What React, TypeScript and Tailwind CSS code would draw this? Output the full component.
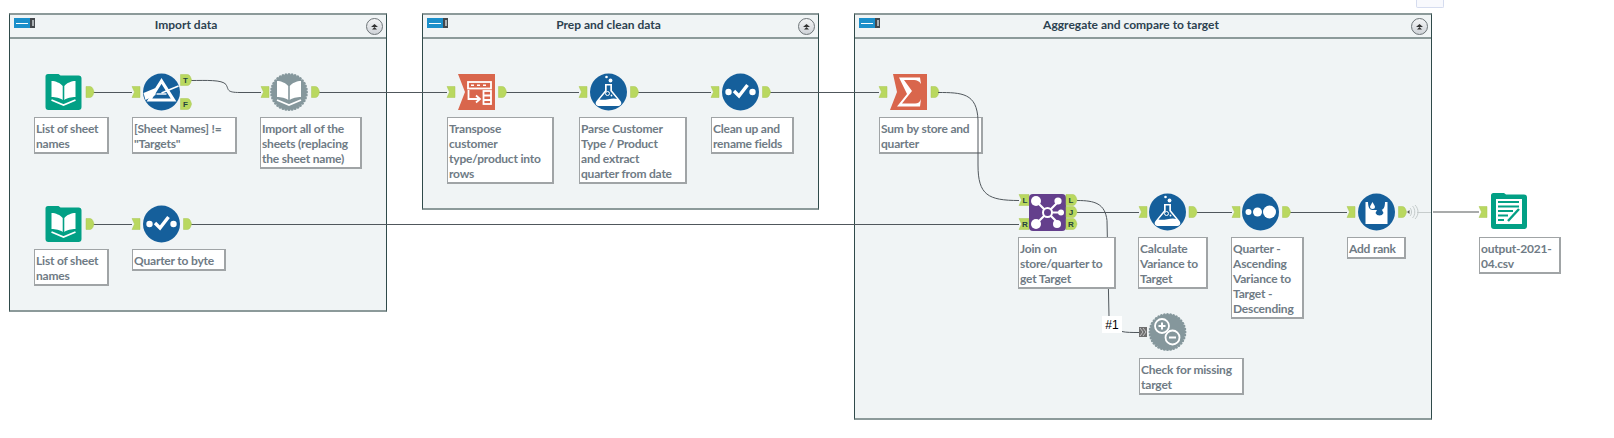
import type { ReactNode } from 'react'

const CONTAINERS = [
  { title: 'Import data', pos: 'left-[9px] top-[13px] w-[378px] h-[299px]' },
  { title: 'Prep and clean data', pos: 'left-[422px] top-[13px] w-[397px] h-[197px]' },
  { title: 'Aggregate and compare to target', pos: 'left-[854px] top-[13px] w-[578px] h-[407px]' },
]

const NOTES = [
  { text: 'List of sheet names', pos: 'left-[34px] top-[117px] w-[75px] h-[37px]' },
  { text: '[Sheet Names] != "Targets"', pos: 'left-[132px] top-[117px] w-[105px] h-[37px]' },
  { text: 'Import all of the sheets (replacing the sheet name)', pos: 'left-[260px] top-[117px] w-[102px] h-[52px]' },
  { text: 'List of sheet names', pos: 'left-[34px] top-[249px] w-[75px] h-[37px]' },
  { text: 'Quarter to byte', pos: 'left-[132px] top-[249px] w-[94px] h-[22px]' },
  { text: 'Transpose customer type/product into rows', pos: 'left-[447px] top-[117px] w-[107px] h-[67px]' },
  { text: 'Parse Customer Type / Product and extract quarter from date', pos: 'left-[579px] top-[117px] w-[108px] h-[67px] pr-[10px]' },
  { text: 'Clean up and rename fields', pos: 'left-[711px] top-[117px] w-[83px] h-[37px]' },
  { text: 'Sum by store and quarter', pos: 'left-[879px] top-[117px] w-[104px] h-[37px]' },
  { text: 'Join on store/quarter to get Target', pos: 'left-[1018px] top-[237px] w-[98px] h-[52px]' },
  { text: 'Calculate Variance to Target', pos: 'left-[1138px] top-[237px] w-[70px] h-[52px]' },
  { text: 'Quarter - Ascending Variance to Target - Descending', pos: 'left-[1231px] top-[237px] w-[73px] h-[82px]' },
  { text: 'Add rank', pos: 'left-[1347px] top-[237px] w-[59px] h-[22px]' },
  { text: 'output-2021-04.csv', pos: 'left-[1479px] top-[237px] w-[82px] h-[37px]' },
  { text: 'Check for missing target', pos: 'left-[1139px] top-[358px] w-[105px] h-[37px]' },
]

const GREEN = '#b9d85f'
const BLUE = '#155f9b'
const TEAL = '#02a085'
const ORANGE = '#d9664c'
const GREY = '#85979c'

function InAnchor({ x, y }: { x: number; y: number }) {
  return (
    <g transform={`translate(${x} ${y})`}>
      <path d="M0 -5.5H8V5.5H0L2.5 0Z" fill={GREEN} stroke="#a9c654" strokeWidth="0.5" />
    </g>
  )
}

function OutAnchor({ x, y }: { x: number; y: number }) {
  return (
    <g transform={`translate(${x} ${y})`}>
      <path d="M0 -5.5H4C6.5 -5.5 7.5 -2 8 0C7.5 2 6.5 5.5 4 5.5H0Z" fill={GREEN} stroke="#a9c654" strokeWidth="0.5" />
    </g>
  )
}

function LabelOut({ x, y, label }: { x: number; y: number; label: string }) {
  return (
    <g transform={`translate(${x} ${y})`}>
      <path d="M0 -5.5H7C9.5 -5.5 10.5 -2 11 0C10.5 2 9.5 5.5 7 5.5H0Z" fill={GREEN} stroke="#a9c654" strokeWidth="0.5" />
      <text x="5" y="3" fontSize="8" fontWeight="700" fill="#24443c" textAnchor="middle" fontFamily="Liberation Sans, sans-serif">{label}</text>
    </g>
  )
}

function LabelIn({ x, y, label }: { x: number; y: number; label: string }) {
  return (
    <g transform={`translate(${x} ${y})`}>
      <path d="M0 -5.5H10V5.5H0L2.5 0Z" fill={GREEN} stroke="#a9c654" strokeWidth="0.5" />
      <text x="6" y="3" fontSize="8" fontWeight="700" fill="#24443c" textAnchor="middle" fontFamily="Liberation Sans, sans-serif">{label}</text>
    </g>
  )
}

function Gear({ cx, cy, children }: { cx: number; cy: number; children: ReactNode }) {
  const teeth = Array.from({ length: 36 }, (_, i) => {
    const a = (i * Math.PI * 2) / 36
    return <circle key={i} cx={cx + Math.cos(a) * 17.5} cy={cy + Math.sin(a) * 17.5} r="1.5" fill={GREY} />
  })
  return (
    <g>
      {teeth}
      <circle cx={cx} cy={cy} r="17.5" fill={GREY} />
      {children}
    </g>
  )
}

function BookPages({ dx, dy }: { dx: number; dy: number }) {
  return (
    <g transform={`translate(${dx} ${dy})`} fill="#fff">
      <path d="M6 7C10 7 15 9 17.2 12V26C15 24 10 23 6 23Z" />
      <path d="M30 7C26 7 21 9 18.8 12V26C21 24 26 23 30 23Z" />
      <path d="M6 26L18 31L30 26" fill="none" stroke="#fff" strokeWidth="1.8" />
    </g>
  )
}

function BookFolder({ x, y }: { x: number; y: number }) {
  return (
    <g transform={`translate(${x} ${y})`}>
      <path d="M2.5 0H13L15 1.5H33A3 3 0 0 1 36 4.5V33A3 3 0 0 1 33 36H3A3 3 0 0 1 0 33V2.5A2.5 2.5 0 0 1 2.5 0Z" fill={TEAL} />
      <BookPages dx={0} dy={0} />
    </g>
  )
}

function Circle({ cx, cy, children }: { cx: number; cy: number; children: ReactNode }) {
  return (
    <g transform={`translate(${cx} ${cy})`}>
      <circle r="18.5" fill={BLUE} />
      {children}
    </g>
  )
}

function Check() {
  return (
    <g>
      <circle cx="-12" cy="0" r="3.2" fill="#fff" />
      <circle cx="12" cy="0" r="3.2" fill="#fff" />
      <path d="M-6.5 -1L-1.5 4L7 -7" fill="none" stroke="#fff" strokeWidth="3.4" />
    </g>
  )
}

function Flask() {
  return (
    <g>
      <circle cx="-2" cy="-15" r="1.3" fill="#fff" />
      <circle cx="2" cy="-11.5" r="1.9" fill="#fff" />
      <path d="M-3.5 -8H3.5V-1.5L12 9C14 12 12 14 9 14H-9C-12 14 -14 12 -12 9L-3.5 -1.5Z" fill="#fff" />
      <path d="M-1.8 -6.5H1.8V-1L8.5 7C4 5 -3 9 -9 7.5L-1.8 -1Z" fill={BLUE} />
      <circle cx="-1" cy="1.5" r="2" fill="none" stroke="#fff" strokeWidth="1" />
      <circle cx="3" cy="3.5" r="0.9" fill="#fff" />
    </g>
  )
}

function Wires() {
  return (
    <g fill="none" stroke="#50575c" strokeWidth="1" transform="translate(0 0.5)">
      <path d="M93 92H132" />
      <path d="M191 80C206 80 222 79 226 84C229 89 226 92 240 92H261" />
      <path d="M319 92H447" />
      <path d="M506 92H579" />
      <path d="M638 92H711" />
      <path d="M770 92H879" />
      <path d="M93 224H132" />
      <path d="M191 224H1019" />
      <path d="M1077 212H1139" />
      <path d="M1197 212H1232" />
      <path d="M1290 212H1347" />
      <path d="M1077 200C1095 200 1105 203 1107 220L1109 316" />
      <path d="M1122 331C1126 332 1132 332 1139 332" />
    </g>
  )
}

function Diagram() {
  return (
    <svg className="absolute left-0 top-0 pointer-events-none" width="1614" height="438" viewBox="0 0 1614 438">
      <Wires />
      <path d="M1417 212.5H1431" fill="none" stroke="#c6cccc" strokeWidth="1" />
      <path d="M1433 212H1479" fill="none" stroke="#a9abab" strokeWidth="2" />

      {/* Import data */}
      <BookFolder x={45.5} y={74} />
      <OutAnchor x={86} y={92} />
      <InAnchor x={132} y={92} />
      <Circle cx={161.5} cy={92}>
        <path d="M0 -11L-12 8H12Z" fill="none" stroke="#fff" strokeWidth="3.2" />
        <path d="M-18 1L-6 -4V3L-16 8Z" fill="#fff" />
        <path d="M0 1L17 -6" stroke="#fff" strokeWidth="1.6" />
        <path d="M-5 2H5" stroke="#fff" strokeWidth="1.4" />
      </Circle>
      <LabelOut x={180.5} y={80} label="T" />
      <LabelOut x={180.5} y={104} label="F" />
      <InAnchor x={261} y={92} />
      <Gear cx={289} cy={92}>
        <BookPages dx={271} dy={74} />
      </Gear>
      <OutAnchor x={311.5} y={92} />

      <BookFolder x={45.5} y={206} />
      <OutAnchor x={86} y={224} />
      <InAnchor x={132} y={224} />
      <Circle cx={161.5} cy={224}><Check /></Circle>
      <OutAnchor x={183.5} y={224} />

      {/* Prep and clean data */}
      <InAnchor x={447} y={92} />
      <g transform="translate(458 74)">
        <path d="M0 0H37V36H0L7 18Z" fill={ORANGE} />
        <g fill="none" stroke="#fff" strokeWidth="1.8">
          <rect x="10" y="8" width="23" height="6.5" />
          <path d="M10.5 16V25H21M18 21.5L22 25L18 28.5" />
          <rect x="25.5" y="17" width="7.5" height="13" />
          <path d="M25.5 21.5H33M25.5 26H33" />
        </g>
        <path d="M13 11.2H16M19 11.2H22M25 11.2H28" stroke="#fff" strokeWidth="1.6" />
      </g>
      <OutAnchor x={498.5} y={92} />
      <InAnchor x={579} y={92} />
      <Circle cx={608.5} cy={92}><Flask /></Circle>
      <OutAnchor x={630.5} y={92} />
      <InAnchor x={711} y={92} />
      <Circle cx={740.5} cy={92}><Check /></Circle>
      <OutAnchor x={762.5} y={92} />

      {/* Aggregate and compare to target */}
      <InAnchor x={879} y={92} />
      <g transform="translate(890 74)">
        <path d="M3 0H37V36H0L7 18Z" fill={ORANGE} />
        <path d="M9 3.5H30L31 10C29 7 27 6 24 6H14L22 17L12 29.5H25C28 29.5 30 28 31 25L30 32.5H7L17 20Z" fill="#fff" />
      </g>
      <OutAnchor x={931} y={92} />

      <LabelIn x={1019} y={200} label="L" />
      <LabelIn x={1019} y={224} label="R" />
      <g transform="translate(1029 194)">
        <rect width="37" height="37" rx="4" fill="#643f8c" />
        <g stroke="#fff" strokeWidth="2.2">
          <path d="M7 7L18.5 18.5M30 7L18.5 18.5M7 30L18.5 18.5M30 30L18.5 18.5M18.5 18.5H33" />
        </g>
        <circle cx="18.5" cy="18.5" r="4.5" fill="#643f8c" stroke="#fff" strokeWidth="2" />
        <g fill="#fff">
          <circle cx="7" cy="7" r="5" />
          <circle cx="29" cy="7" r="3.6" />
          <circle cx="32" cy="18.5" r="3" />
          <circle cx="7" cy="30" r="5" />
          <circle cx="28" cy="30" r="4" />
        </g>
      </g>
      <LabelOut x={1066} y={200} label="L" />
      <LabelOut x={1066} y={212} label="J" />
      <LabelOut x={1066} y={224} label="R" />

      <InAnchor x={1139} y={212} />
      <Circle cx={1167.5} cy={212}><Flask /></Circle>
      <OutAnchor x={1189} y={212} />

      <InAnchor x={1232} y={212} />
      <Circle cx={1260.5} cy={212}>
        <circle cx="-12" cy="0" r="3" fill="#fff" />
        <circle cx="-3" cy="0" r="4.5" fill="#fff" />
        <circle cx="9" cy="0" r="6.5" fill="#fff" />
      </Circle>
      <OutAnchor x={1282.5} y={212} />

      <InAnchor x={1347} y={212} />
      <Circle cx={1376.5} cy={212}>
        <rect x="-11" y="-10" width="22" height="22" fill="#fff" />
        <path d="M-8.5 -10H8.5C8.5 -5 7 -2 4 -2H-4C-7 -2 -8.5 -5 -8.5 -10Z" fill={BLUE} />
        <path d="M-4 -10L-1.5 -5.5A2.5 2.5 0 0 1 -6.5 -5.5Z" fill="#fff" />
        <path d="M3 -7L7 1A4.4 4.4 0 0 1 -1 1Z" fill={BLUE} />
      </Circle>
      <OutAnchor x={1398.5} y={212} />
      <g fill="none" stroke="#c4cbcb" strokeWidth="1">
        <path d="M1410 208C1412 210 1412 214 1410 216" />
        <path d="M1412.5 206C1415.5 209 1415.5 215 1412.5 218" />
        <path d="M1415 205C1419 209 1419 215 1415 219" />
      </g>
      <path d="M1407 212L1409.5 210V214Z" fill="#555" />

      <InAnchor x={1479} y={212} />
      <g transform="translate(1491 193)">
        <path d="M2.5 0H13L15 1.5H33A3 3 0 0 1 36 4.5V33A3 3 0 0 1 33 36H3A3 3 0 0 1 0 33V2.5A2.5 2.5 0 0 1 2.5 0Z" fill={TEAL} />
        <rect x="5" y="6" width="26" height="25" fill="#fff" />
        <path d="M7 9H28M7 13.5H28M7 18H22M7 22.5H17M7 27H13" stroke={TEAL} strokeWidth="2" />
        <path d="M17 28L28 16" stroke={TEAL} strokeWidth="2.4" />
      </g>

      <g transform="translate(1139 332)">
        <rect width="8" height="10" y="-5" fill="#6e6e6e" />
        <path d="M1 -4L4 0L1 4M4 -4L7 0L4 4" fill="none" stroke="#d5d5d5" strokeWidth="0.8" />
      </g>
      <Gear cx={1167.5} cy={332}>
        <g fill="none" stroke="#fff" strokeWidth="1.8">
          <circle cx="1162" cy="326" r="7" />
          <circle cx="1172.5" cy="337.5" r="7" fill={GREY} />
          <path d="M1158.5 326H1165.5M1162 322.5V329.5M1169 337.5H1176" strokeWidth="2" />
        </g>
      </Gear>
    </svg>
  )
}

function Collapse() {
  return (
    <div className="w-[17px] h-[17px] rounded-full border border-[#6d7478] bg-gradient-to-b from-[#f4f5f6] to-[#cfd3d8] flex items-center justify-center">
      <svg width="9" height="6" viewBox="0 0 9 6">
        <path d="M4.5 0L8 3H1Z M4.5 3L7 5.5H2Z" fill="#333" />
      </svg>
    </div>
  )
}

function ContainerBadge() {
  return (
    <div className="w-[21px] h-[10px] flex">
      <div className="w-[16px] h-full bg-[#1b8fca] flex items-center px-[2px]">
        <div className="w-full h-px bg-white" />
      </div>
      <div className="w-[5px] h-full bg-[#43484c] flex items-center justify-center">
        <div className="w-[2px] h-[6px] bg-[#aab0b3]" />
      </div>
    </div>
  )
}

export default function App() {
  return (
    <div className="relative w-[1614px] h-[438px] bg-white overflow-hidden font-['Lato',sans-serif]">
      <div className="absolute left-[1416px] top-0 w-[28px] h-[8px] bg-[#f8f9fd] border border-t-0 border-[#d5dcef] rounded-b-[2px]" />

      {CONTAINERS.map((c) => (
        <section key={c.title} className={`absolute ${c.pos} bg-[#f0f4f5] border-x border-[#2f4a4a] border-t-2 border-t-[#8c9a9a] border-b-2 border-b-[#8c9a9a]`}>
          <header className="relative h-[24px] pr-[24px] pb-[2px] border-b-2 border-[#8c9a9a] flex items-center justify-center">
            <div className="absolute left-[4px] top-[3px]"><ContainerBadge /></div>
            <h2 className="text-[12px] font-bold text-[#2c4250]">{c.title}</h2>
            <div className="absolute right-[3px] top-[3px]"><Collapse /></div>
          </header>
        </section>
      ))}

      <Diagram />

      {NOTES.map((n) => (
        <p key={n.pos} className={`absolute ${n.pos} bg-white border border-[#a0a4a6] border-b-2 border-r-2 pl-[1px] py-[3px] text-[12px] tracking-[-0.2px] leading-[15px] font-bold text-[#6f7b85]`}>
          {n.text}
        </p>
      ))}

      {/* this wire runs over its annotation, the others run under */}
      <svg className="absolute left-0 top-0 pointer-events-none" width="1614" height="438" viewBox="0 0 1614 438">
        <path d="M938 92.5C962 92.5 977 93 978 120V165C978 195 988 200.5 1019 200.5" fill="none" stroke="#50575c" strokeWidth="1" />
      </svg>

      <div className="absolute left-[1102px] top-[316px] w-[20px] h-[17px] bg-white flex items-center justify-center text-[12px] text-black font-['Liberation_Sans',sans-serif]">
        #1
      </div>
    </div>
  )
}
